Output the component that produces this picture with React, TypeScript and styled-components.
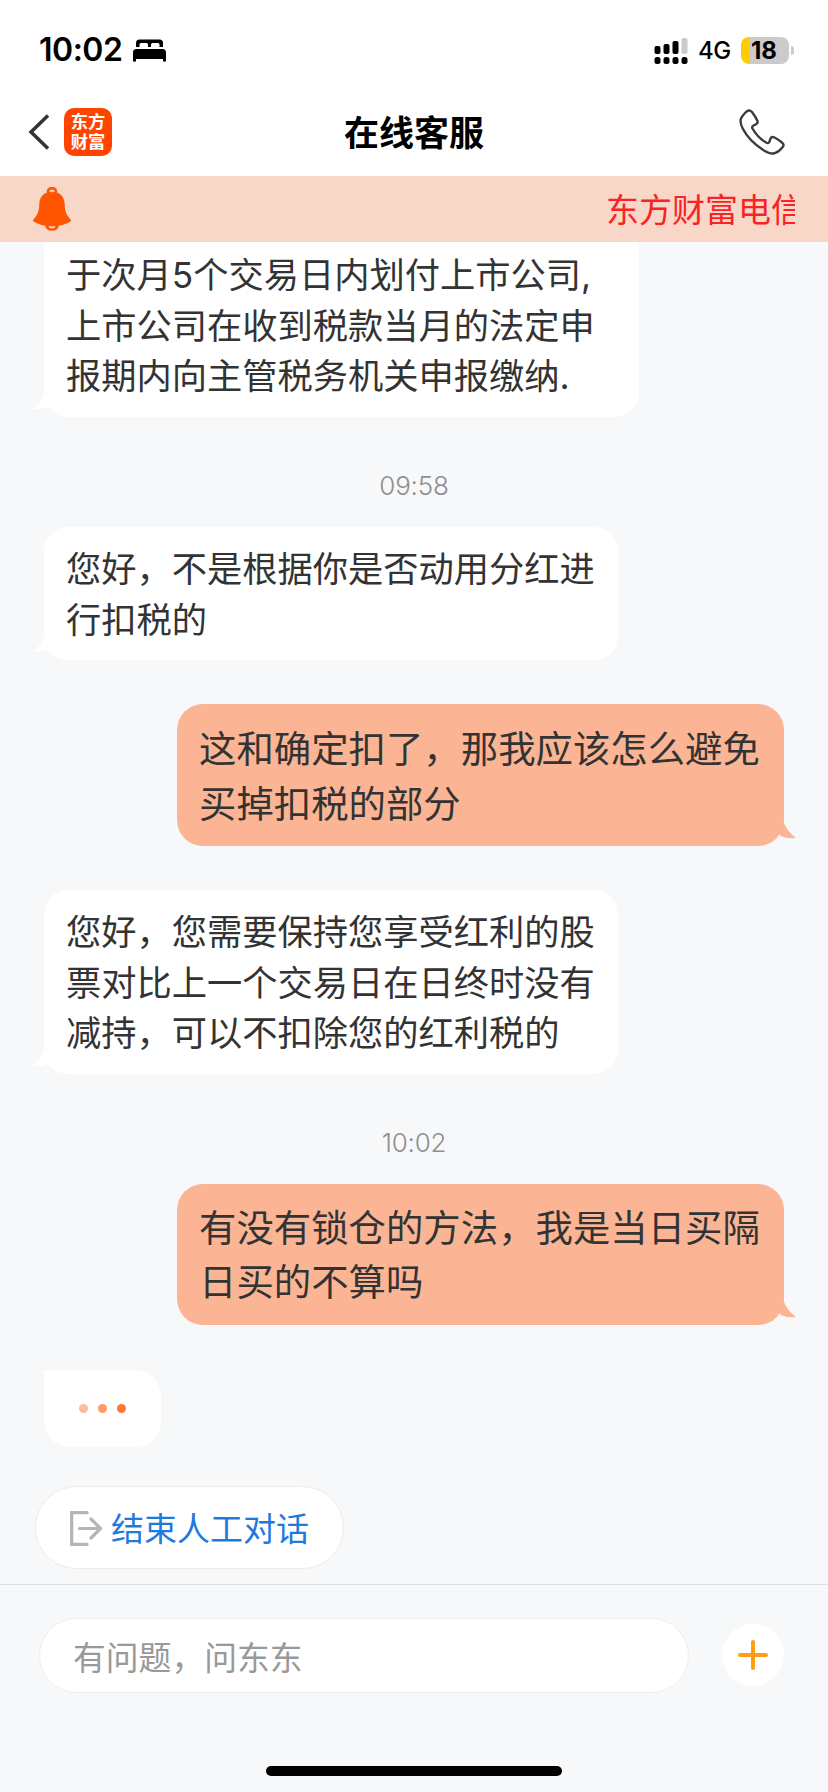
import React from 'react';
import styled, { createGlobalStyle } from 'styled-components';

const GlobalStyle = createGlobalStyle`
  *, *::before, *::after { box-sizing: border-box; }
  body {
    margin: 0;
    background: #f6f8fa;
    font-family: Inter, 'Noto Sans CJK SC', sans-serif;
    -webkit-font-smoothing: antialiased;
  }
`;

const Screen = styled.div`
  width: 828px;
  height: 1792px;
  display: flex;
  flex-direction: column;
  overflow: hidden;
  background: #f6f8fa;
`;

const StatusBar = styled.header`
  height: 100px;
  flex: none;
  display: flex;
  align-items: center;
  justify-content: space-between;
  padding: 0 34px 0 39px;
  background: #fff;
`;

const StatusGroup = styled.div`
  display: flex;
  align-items: center;
`;

const Clock = styled.span`
  width: 94px;
  font-size: 32px;
  font-weight: 600;
  letter-spacing: -0.5px;
  line-height: 40px;
  color: #000;
`;

const Network = styled.span`
  margin: 2px 0 0 10px;
  width: 43px;
  font-size: 24px;
  font-weight: 500;
  letter-spacing: -0.6px;
  line-height: 30px;
`;

const Battery = styled.div`
  width: 48px;
  height: 27px;
  border-radius: 8px;
  background: linear-gradient(90deg, #ffcc00 9px, #cbcbcb 9px);
  font-size: 24px;
  font-weight: 700;
  line-height: 28px;
  text-align: center;
  padding-right: 2px;
`;

const BatteryCap = styled.div`
  width: 3px;
  height: 9px;
  margin-left: 2px;
  border-radius: 0 4px 4px 0;
  background: #cbcbcb;
`;

const NavBar = styled.nav`
  height: 76px;
  flex: none;
  display: grid;
  grid-template-columns: 1fr auto 1fr;
  align-items: center;
  padding: 0 43px 12px 28px;
  background: #fff;
`;

const NavLeft = styled.div`
  display: flex;
  align-items: center;
  gap: 14px;
`;

const NavRight = styled.div`
  display: flex;
  justify-content: flex-end;
`;

const Logo = styled.div`
  width: 48px;
  height: 48px;
  display: flex;
  flex-direction: column;
  align-items: center;
  justify-content: center;
  border-radius: 10px;
  background: #ff4400;
  color: #fff;
  font-size: 17.3px;
  font-weight: 700;
  line-height: 20.5px;
`;

const Title = styled.h1`
  margin: 2px 0 0 15px;
  font-size: 35px;
  font-weight: 700;
  line-height: 48px;
  color: #000;
`;

const Notice = styled.div`
  height: 66px;
  flex: none;
  display: flex;
  align-items: center;
  justify-content: space-between;
  padding: 0 33px;
  background: #f8d6c8;
`;

const NoticeText = styled.div`
  width: 189px;
  padding-top: 2px;
  overflow: hidden;
  white-space: nowrap;
  font-size: 33px;
  line-height: 48px;
  color: #fa2222;
`;

const Chat = styled.main`
  flex: 1;
  min-height: 0;
  display: flex;
  flex-direction: column;
  align-items: flex-start;
  padding: 0 44px;
`;

const BotBubble = styled.div<{ $wide?: boolean; $continued?: boolean }>`
  position: relative;
  flex: none;
  width: ${p => (p.$wide ? 595 : 574)}px;
  padding: ${p => (p.$continued ? 9 : 18)}px 21px 14px 22px;
  border-radius: ${p => (p.$continued ? '0 0 24px 24px' : '24px')};
  background: #fff;
  color: #333;
  font-size: 35.25px;
  line-height: 50.5px;
`;

const BotText = styled.div`
  width: 530px;
`;

const UserBubble = styled.div`
  position: relative;
  flex: none;
  align-self: flex-end;
  width: 607px;
  margin: 44px 0;
  padding: 17.5px 22px 14.5px;
  border-radius: 26px;
  background: #fbb595;
  color: #333;
  font-size: 37.4px;
  line-height: 55px;
`;

const TimedUserBubble = styled(UserBubble)`
  margin: 0 0 45px;
  line-height: 54.5px;
`;

const BotTail = styled.svg`
  position: absolute;
  left: -12px;
  bottom: 7px;
`;

const UserTail = styled.svg`
  position: absolute;
  right: -12px;
  bottom: 7px;
`;

const TimeMark = styled.time`
  flex: none;
  align-self: center;
  margin: 51.5px 0 23px;
  font-size: 26px;
  font-weight: 300;
  line-height: 36px;
  letter-spacing: -0.2px;
  color: #8f8f8f;
`;

const Typing = styled.div`
  flex: none;
  width: 117px;
  height: 77px;
  display: flex;
  align-items: center;
  justify-content: center;
  gap: 10px;
  border-radius: 0 26px 26px 26px;
  background: #fff;
`;

const Dot = styled.i<{ $color: string }>`
  width: 9px;
  height: 9px;
  border-radius: 50%;
  background: ${p => p.$color};
`;

const EndButton = styled.button`
  flex: none;
  display: flex;
  align-items: center;
  gap: 8px;
  width: 309px;
  height: 83px;
  margin: 39px 0 0 -9px;
  padding: 2px 0 0 34px;
  border: 1px solid #ebebeb;
  border-radius: 42px;
  background: #fff;
  color: #1f7ae0;
  font: inherit;
  font-size: 33px;
  line-height: 48px;
  white-space: nowrap;
`;

const Composer = styled.footer`
  flex: none;
  height: 208px;
  display: flex;
  flex-direction: column;
  align-items: center;
  justify-content: space-between;
  border-top: 1px solid #dcdee0;
  padding: 33px 44px 16px 39px;
`;

const ComposerRow = styled.div`
  width: 100%;
  display: flex;
  align-items: center;
  justify-content: space-between;
`;

const Field = styled.div`
  width: 650px;
  height: 75px;
  padding: 3px 33px 0;
  border: 1px solid #eeeeee;
  border-radius: 38px;
  background: #fff;
  color: #999;
  font-size: 32.8px;
  line-height: 72px;
`;

const AddButton = styled.button`
  width: 62px;
  height: 62px;
  display: flex;
  align-items: center;
  justify-content: center;
  margin-bottom: 1px;
  padding: 0;
  border: 0;
  border-radius: 50%;
  background: #fff;
`;

const HomeIndicator = styled.div`
  width: 296px;
  height: 10px;
  margin-left: 5px;
  border-radius: 5px;
  background: #000;
`;

const BedIcon = () => (
  <svg width="33" height="23" viewBox="0 0 33 23">
    <path d="M3 8V4Q3 0.5 6.5 0.5H26.5Q30 0.5 30 4V8H26.5V5.5Q26.500 4 25 4H19.500Q18 4 18 5.500V8H15V5.500Q15 4 13.500 4H8Q6.500 4 6.500 5.500V8Z" />
    <path d="M0 22V13.500Q0 10 3.500 10H29.500Q33 10 33 13.500V22Q33 22.800 31.500 22.800Q30 22.800 30 22V20H3V22Q3 22.800 1.500 22.800Q0 22.800 0 22Z" />
  </svg>
);

const SignalIcon = () => (
  <svg width="34" height="27" viewBox="0 0 34 27">
    <rect x="0.500" y="9" width="6" height="8" rx="2" />
    <rect x="9.500" y="7" width="6" height="10" rx="2" />
    <rect x="18.500" y="4" width="6" height="13" rx="2" />
    <rect x="27.500" y="1" width="6" height="16" rx="2" fill="#cbcbcb" />
    {[0.5, 9.5, 18.5, 27.5].map(x => (
      <rect key={x} x={x} y="20" width="6" height="7" rx="2.500" />
    ))}
  </svg>
);

const BackIcon = () => (
  <svg width="22" height="36" viewBox="0 0 22 36" fill="none" stroke="#333" strokeWidth="3.5">
    <path d="M20 1.500 3 18 20 34.500" />
  </svg>
);

const PhoneIcon = () => (
  <svg width="46" height="46" viewBox="0 0 46 46" fill="none" stroke="#3c3c3c" strokeWidth="2.4" strokeLinejoin="round">
    <path d="M6.500 3.500Q10 0 13 3Q16.500 7.500 18.500 12Q19.200 14 17 15.300L14.500 16.500Q12.500 17.500 13.500 19.500Q18.500 28.500 27.500 33.800Q29.500 34.800 30.500 32.500L31.500 29.500Q32.500 27.200 35.500 28.500Q39.500 30.500 43.500 34Q45.500 36 43.500 38.300Q39.500 43.500 34.500 44.500Q31 45 25 41.500Q10 32 4 20Q0.500 13.500 2 9.500Q3.500 6.500 6.500 3.500Z" />
  </svg>
);

const BellIcon = () => (
  <svg width="38" height="44" viewBox="0 0 38 44">
    <g fill="none" stroke="#ff5500" strokeWidth="2.600">
      <ellipse cx="19" cy="4.300" rx="4" ry="3.200" />
      <path d="M13.500 38Q14 42.500 19 42.500Q24 42.500 24.500 38" />
    </g>
    <path fill="#ff5500" d="M19 4.500C26.500 4.500 31.500 9.500 31.700 17C31.800 24.500 33.500 28 37.500 32.500Q38.500 34 37 34.700Q28.500 39.500 19 39.500Q9.500 39.500 1 34.700Q-0.500 34 0.500 32.500C4.500 28 6.200 24.500 6.300 17C6.500 9.500 11.500 4.500 19 4.500Z" />
    <ellipse cx="19" cy="4.200" rx="2.200" ry="1" fill="#f8d6c8" />
    <ellipse cx="19" cy="40.400" rx="2.800" ry="0.900" fill="#f8d6c8" />
  </svg>
);

const ExitIcon = () => (
  <svg width="33" height="35" viewBox="0 0 33 35" fill="none" stroke="#b5b5b5" strokeWidth="3.2">
    <path d="M17 1.700H1.700V33.300H17" strokeLinecap="round" />
    <path d="M9.500 17.500H30M21 8 30.500 17.500 21 27" strokeLinecap="round" strokeLinejoin="round" />
  </svg>
);

const PlusIcon = () => (
  <svg width="30" height="30" viewBox="0 0 30 30" stroke="#ff9d16" strokeWidth="4" strokeLinecap="round">
    <path d="M15 2V28M2 15H28" />
  </svg>
);

const LeftTail = () => (
  <BotTail width="18" height="18" viewBox="0 0 18 18" fill="#fff">
    <path d="M12 1Q8.500 12 0 17Q8 18 16 15L18 1Z" />
  </BotTail>
);

const RightTail = () => (
  <UserTail width="18" height="18" viewBox="0 0 18 18" fill="#fbb595">
    <path d="M6 2Q9.500 11 18 17Q10 18 2.500 15L0 2Z" />
  </UserTail>
);

export default function App() {
  return (
    <Screen>
      <GlobalStyle />
      <StatusBar>
        <StatusGroup>
          <Clock>10:02</Clock>
          <BedIcon />
        </StatusGroup>
        <StatusGroup>
          <SignalIcon />
          <Network>4G</Network>
          <Battery>18</Battery>
          <BatteryCap />
        </StatusGroup>
      </StatusBar>
      <NavBar>
        <NavLeft>
          <BackIcon />
          <Logo>
            <span>东方</span>
            <span>财富</span>
          </Logo>
        </NavLeft>
        <Title>在线客服</Title>
        <NavRight><PhoneIcon /></NavRight>
      </NavBar>
      <Notice>
        <BellIcon />
        <NoticeText>东方财富电信</NoticeText>
      </Notice>
      <Chat>
        <BotBubble $wide $continued>
          <BotText>于次月5个交易日内划付上市公司,上市公司在收到税款当月的法定申报期内向主管税务机关申报缴纳.</BotText>
          <LeftTail />
        </BotBubble>
        <TimeMark>09:58</TimeMark>
        <BotBubble>
          <BotText>您好，不是根据你是否动用分红进行扣税的</BotText>
          <LeftTail />
        </BotBubble>
        <UserBubble>
          这和确定扣了，那我应该怎么避免买掉扣税的部分
          <RightTail />
        </UserBubble>
        <BotBubble>
          <BotText>您好，您需要保持您享受红利的股票对比上一个交易日在日终时没有减持，可以不扣除您的红利税的</BotText>
          <LeftTail />
        </BotBubble>
        <TimeMark>10:02</TimeMark>
        <TimedUserBubble>
          有没有锁仓的方法，我是当日买隔日买的不算吗
          <RightTail />
        </TimedUserBubble>
        <Typing>
          <Dot $color="#ffbb9b" />
          <Dot $color="#ff9a69" />
          <Dot $color="#ff7733" />
        </Typing>
        <EndButton>
          <ExitIcon />
          结束人工对话
        </EndButton>
      </Chat>
      <Composer>
        <ComposerRow>
          <Field>有问题，问东东</Field>
          <AddButton><PlusIcon /></AddButton>
        </ComposerRow>
        <HomeIndicator />
      </Composer>
    </Screen>
  );
}
